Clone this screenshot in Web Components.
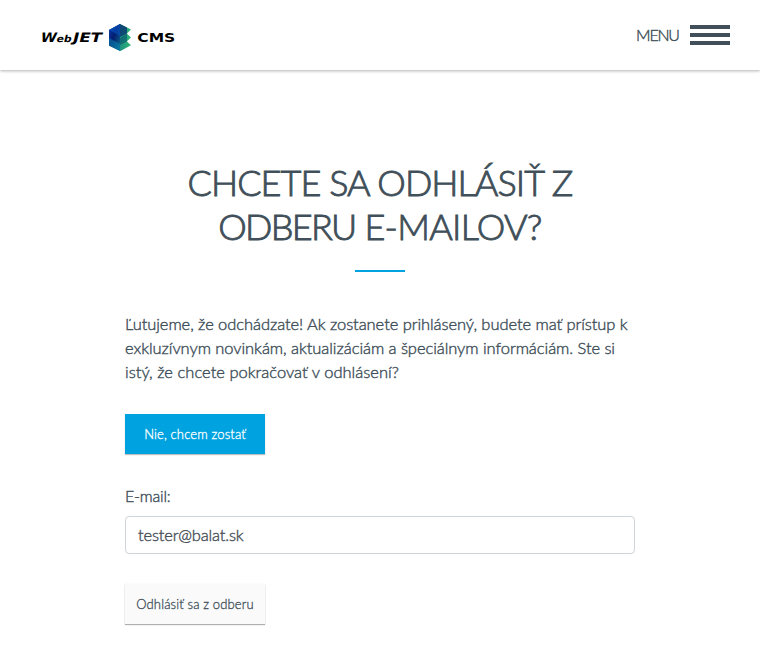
<!DOCTYPE html>
<html lang="sk">
<head>
<meta charset="utf-8">
<title>WebJET CMS</title>
<style>
body{margin:0;min-height:100vh;background:#fff;color:#404f59;font:300 16px/24px Lato,"Open Sans",sans-serif;-webkit-text-stroke:.4px currentColor}
</style>
</head>
<body>
<unsubscribe-page></unsubscribe-page>
<script>
function define(name, html, setup) {
  const template = document.createElement('template');
  template.innerHTML = html;
  customElements.define(name, class extends HTMLElement {
    constructor() {
      super();
      this.attachShadow({ mode: 'open' }).append(template.content.cloneNode(true));
    }
    connectedCallback() { if (setup) setup(this); }
  });
}

define('webjet-logo', `
<style>
:host{display:block;width:136px;height:30px}
svg{display:block}
text{font-family:"DejaVu Sans",sans-serif;font-weight:bold;fill:#000;stroke:none}
</style>
<svg width="136" height="30" viewBox="40 22 136 30" role="img" aria-label="WebJET CMS">
  <defs>
    <linearGradient id="g" x1="0" x2="1"><stop offset="0" stop-color="#106b86"/><stop offset="1" stop-color="#2eb777"/></linearGradient>
    <linearGradient id="b" x1="0" x2="1" y2="1"><stop offset="0" stop-color="#063fb0"/><stop offset=".45" stop-color="#051d70"/><stop offset="1" stop-color="#0b7690"/></linearGradient>
  </defs>
  <text transform="translate(39.8 42) skewX(-14)" font-size="13" textLength="16" lengthAdjust="spacingAndGlyphs">W</text>
  <text transform="translate(56 42) skewX(-14)" font-size="9.5" textLength="15" lengthAdjust="spacingAndGlyphs">eb</text>
  <text transform="translate(72 42) skewX(-14)" font-size="13" textLength="29" lengthAdjust="spacingAndGlyphs">JET</text>
  <path d="M120 40L127 41.5 131 45.2 120.5 51 109 45.5V40z" fill="url(#g)"/>
  <path d="M120 32L127 33.7 131 37.5 127 41.2 120 45 109 38z" fill="url(#g)"/>
  <path d="M120 24L131 29.6 127 33.5 120 37.2 109 30z" fill="url(#g)"/>
  <path d="M109 30L120 24V51L109 45.5z" fill="url(#b)"/>
  <path d="M109 30L120 24V36z" fill="#0755c2" opacity=".6"/>
  <path d="M120 24L127 27.5V33.5L120 37z" fill="#092e72" opacity=".75"/>
  <path d="M120 38L127 33.5V41.5L120 45z" fill="#07586f" opacity=".65"/>
  <path d="M109 38L120 44V51L109 45.5z" fill="#0785ae" opacity=".55"/>
  <text x="137.3" y="42" font-size="13" textLength="38" lengthAdjust="spacingAndGlyphs">CMS</text>
</svg>`);

define('menu-toggle', `
<style>
:host{display:flex;align-items:center;gap:10px}
span{letter-spacing:-1.2px;font-size:16px;margin-right:1.2px}
i{display:grid;gap:4px;width:40px}
b{height:4px;background:#404f59}
</style>
<span><slot></slot></span><i><b></b><b></b><b></b></i>`);

define('site-header', `
<style>
:host{display:flex;box-sizing:border-box;height:70px;padding:0 30px 0 40px;align-items:center;justify-content:space-between;background:#fff;box-shadow:0 1px 3px rgba(0,0,0,.3)}
webjet-logo{margin-top:4px}
</style>
<webjet-logo></webjet-logo><menu-toggle>MENU</menu-toggle>`);

define('page-title', `
<style>
:host{display:block;text-align:center}
h1{margin:0;font-weight:300;font-size:36px;line-height:44px;letter-spacing:-.95px;-webkit-text-stroke:.9px currentColor}
hr{width:50px;height:2px;margin:22px auto 0;border:0;background:#00a3e0}
</style>
<h1><slot></slot></h1><hr>`);

define('text-line', `
<style>:host{display:block;white-space:nowrap;font-size:16.5px;letter-spacing:var(--track,-.07px)}</style><slot></slot>`);

define('action-button', `
<style>
:host{display:block;width:140px}
button{display:block;width:100%;height:40px;padding:0;border:0;background:#00a3e0;color:#fff;font:inherit;font-size:13px;line-height:40px;letter-spacing:.14px;-webkit-text-stroke:.3px currentColor;box-shadow:0 1px 1px rgba(0,0,0,.25)}
:host([plain]) button{background:#fafafa;color:#404f59;box-shadow:0 1px 1px rgba(0,0,0,.3),0 0 1px rgba(0,0,0,.1)}
</style>
<button type="button"><slot></slot></button>`);

define('text-field', `
<style>
:host{display:block}
label{display:block;margin-bottom:8px;letter-spacing:-.2px}
input{display:block;box-sizing:border-box;width:100%;height:38px;padding:0 12px;border:1px solid #ced4da;border-radius:4px;background:#fff;color:#495057;font:inherit;font-size:16.5px;letter-spacing:-.16px;-webkit-text-stroke:inherit}
</style>
<label for="f"><slot></slot></label><input id="f" type="text">`,
  el => { el.shadowRoot.querySelector('input').value = el.getAttribute('value'); });

define('unsubscribe-page', `
<style>
:host{display:block}
main{width:510px;margin:0 auto;padding-top:90px}
section{margin-top:40px}
action-button{margin-top:30px}
text-field{margin-top:30px}
.last{margin-top:30px}
</style>
<site-header></site-header>
<main>
  <page-title>CHCETE SA ODHLÁSIŤ Z<br><span style="letter-spacing:-1.7px">ODBERU</span> <span style="letter-spacing:-.7px">E-MAILOV?</span></page-title>
  <section>
    <text-line>Ľutujeme, že odchádzate! Ak zostanete prihlásený, budete mať prístup k</text-line>
    <text-line style="--track:-.06px">exkluzívnym novinkám, aktualizáciám a špeciálnym informáciám. Ste si</text-line>
    <text-line style="--track:.02px">istý, že chcete pokračovať v odhlásení?</text-line>
  </section>
  <action-button>Nie, chcem zostať</action-button>
  <text-field value="tester@balat.sk">E-mail:</text-field>
  <action-button class="last" plain>Odhlásiť sa z odberu</action-button>
</main>`);
</script>
</body>
</html>
